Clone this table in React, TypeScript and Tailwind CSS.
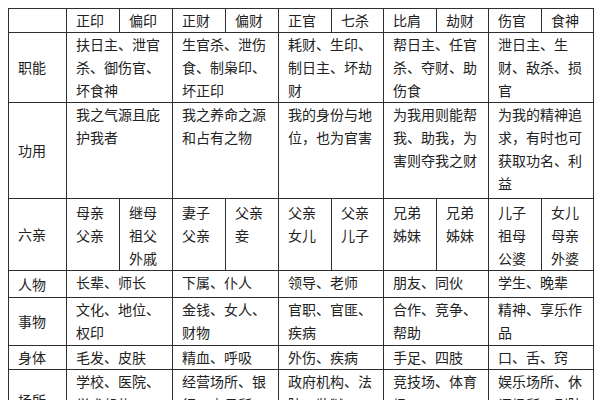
const head = ["正印", "偏印", "正财", "偏财", "正官", "七杀", "比肩", "劫财", "伤官", "食神"];

type Row = { label: string; h: string; cells: string[][] };

const rows: Row[] = [
  {
    label: "职能",
    h: "h-[70px]",
    cells: [
      ["扶日主、泄官", "杀、御伤官、", "坏食神"],
      ["生官杀、泄伤", "食、制枭印、", "坏正印"],
      ["耗财、生印、", "制日主、坏劫", "财"],
      ["帮日主、任官", "杀、夺财、助", "伤食"],
      ["泄日主、生", "财、敌杀、损", "官"],
    ],
  },
  {
    label: "功用",
    h: "h-[96px]",
    cells: [
      ["我之气源且庇", "护我者"],
      ["我之养命之源", "和占有之物"],
      ["我的身份与地", "位，也为官害"],
      ["为我用则能帮", "我、助我，为", "害则夺我之财"],
      ["为我的精神追", "求，有时也可", "获取功名、利", "益"],
    ],
  },
];

const liuqin = [
  ["母亲", "父亲"],
  ["继母", "祖父", "外戚"],
  ["妻子", "父亲"],
  ["父亲", "妾"],
  ["父亲", "女儿"],
  ["父亲", "儿子"],
  ["兄弟", "姊妹"],
  ["兄弟", "姊妹"],
  ["儿子", "祖母", "公婆"],
  ["女儿", "母亲", "外婆"],
];

const rest: Row[] = [
  {
    label: "人物",
    h: "h-[27px]",
    cells: [["长辈、师长"], ["下属、仆人"], ["领导、老师"], ["朋友、同伙"], ["学生、晚辈"]],
  },
  {
    label: "事物",
    h: "h-[48px]",
    cells: [
      ["文化、地位、", "权印"],
      ["金钱、女人、", "财物"],
      ["官职、官匪、", "疾病"],
      ["合作、竞争、", "帮助"],
      ["精神、享乐作", "品"],
    ],
  },
  {
    label: "身体",
    h: "h-[22px]",
    cells: [["毛发、皮肤"], ["精血、呼吸"], ["外伤、疾病"], ["手足、四肢"], ["口、舌、窍"]],
  },
  {
    label: "场所",
    h: "h-[62px]",
    cells: [
      ["学校、医院、", "学术机构、"],
      ["经营场所、银", "行、交易所"],
      ["政府机构、法", "院、监狱"],
      ["竞技场、体育", "场"],
      ["娱乐场所、休", "闲场所、剧院"],
    ],
  },
];

const td = "border border-[#2e2e2e] pl-[9px] pr-0 py-0 align-top whitespace-nowrap";
const label = "border border-[#2e2e2e] pl-[9px] pr-0 py-0 align-middle whitespace-nowrap";

function Lines({ lines }: { lines: string[] }) {
  return (
    <>
      {lines.map((l, i) => (
        <div key={i}>{l}</div>
      ))}
    </>
  );
}

function BodyRow({ row }: { row: Row }) {
  return (
    <tr className={row.h}>
      <td className={label}>{row.label}</td>
      {row.cells.map((c, i) => (
        <td key={i} colSpan={2} className={td}>
          <Lines lines={c} />
        </td>
      ))}
    </tr>
  );
}

export default function App() {
  return (
    <div
      className="h-[400px] w-[600px] overflow-hidden bg-white pl-2 pt-2 text-[14px] leading-[23px] text-[#222]"
      style={{ fontFamily: '"Noto Sans CJK SC", "Noto Sans", sans-serif' }}
    >
      <table className="table-fixed border-collapse">
        <colgroup>
          <col className="w-[58px]" />
          <col className="w-[53px]" />
          <col className="w-[53px]" />
          <col className="w-[53px]" />
          <col className="w-[53px]" />
          <col className="w-[53px]" />
          <col className="w-[52px]" />
          <col className="w-[53px]" />
          <col className="w-[52px]" />
          <col className="w-[53px]" />
          <col className="w-[52px]" />
        </colgroup>
        <tbody>
          <tr className="h-[24px]">
            <td className={label}></td>
            {head.map((h) => (
              <td key={h} className={label}>
                {h}
              </td>
            ))}
          </tr>
          {rows.map((r) => (
            <BodyRow key={r.label} row={r} />
          ))}
          <tr className="h-[72px]">
            <td className={label}>六亲</td>
            {liuqin.map((c, i) => (
              <td key={i} className={`${td} pt-[2px]`}>
                <Lines lines={c} />
              </td>
            ))}
          </tr>
          {rest.map((r) => (
            <BodyRow key={r.label} row={r} />
          ))}
        </tbody>
      </table>
    </div>
  );
}
